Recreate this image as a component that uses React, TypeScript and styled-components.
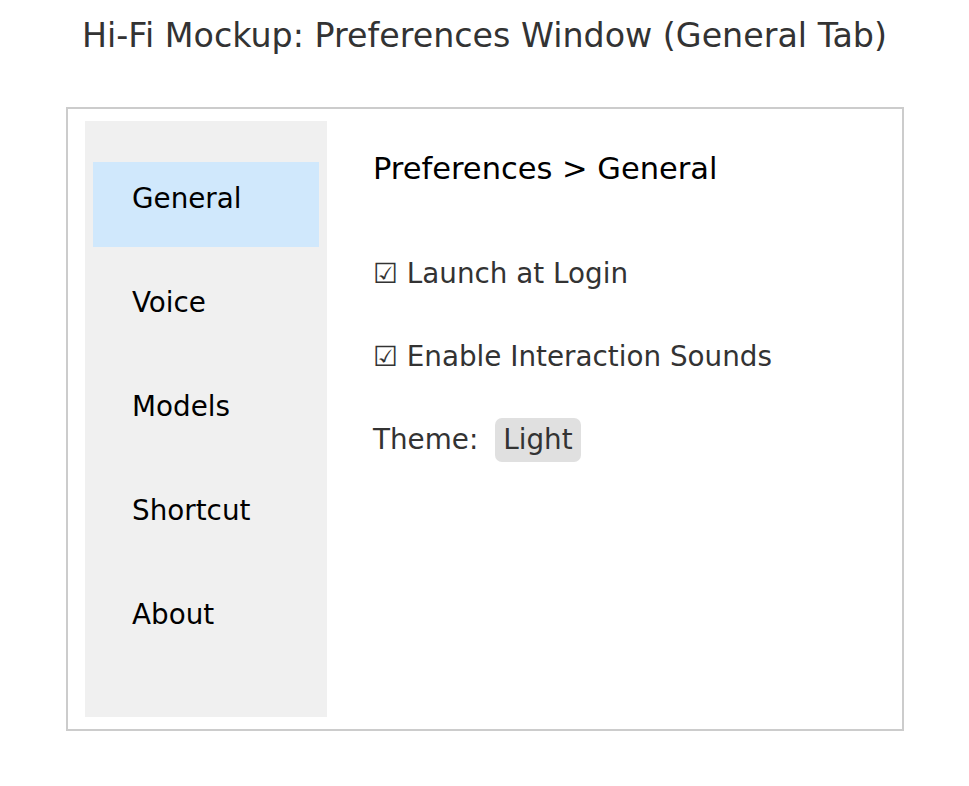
import React from "react";
import styled, { createGlobalStyle } from "styled-components";

const Global = createGlobalStyle`
  html, body { margin: 0; padding: 0; background: #ffffff; }
  body { font-family: "DejaVu Sans", "Noto Sans", sans-serif; }
`;

const Page = styled.div`
  width: 969px;
  height: 786px;
  display: flex;
  flex-direction: column;
  align-items: center;
  background: #ffffff;
`;

const Title = styled.h1`
  margin: 16px 0 0 0;
  font-size: 33.3px;
  line-height: 40px;
  font-weight: normal;
  color: #333333;
  white-space: nowrap;
`;

const Frame = styled.div`
  box-sizing: border-box;
  margin: 51px 0 0 1px;
  width: 838px;
  height: 624px;
  border: 2px solid #cccccc;
  padding: 12px 0 12px 17px;
  display: flex;
`;

const Sidebar = styled.nav`
  box-sizing: border-box;
  width: 242px;
  height: 100%;
  background: #f0f0f0;
  padding: 41px 8px 0 8px;
  display: flex;
  flex-direction: column;
  gap: 19px;
`;

const NavItem = styled.div<{ $active?: boolean }>`
  box-sizing: border-box;
  height: 85px;
  padding: 23px 0 0 39px;
  font-size: 27.8px;
  line-height: 28px;
  color: #000000;
  background: ${(p) => (p.$active ? "#d0e8fc" : "transparent")};
`;

const Content = styled.main`
  flex: 1;
  padding: 30px 0 0 46px;
  display: flex;
  flex-direction: column;
`;

const Heading = styled.h2`
  margin: 0 0 65px 0;
  font-size: 30.5px;
  line-height: 36px;
  font-weight: normal;
  color: #000000;
`;

const Options = styled.div`
  display: flex;
  flex-direction: column;
  gap: 39px;
`;

const Row = styled.div`
  height: 44px;
  display: flex;
  align-items: center;
  font-size: 27.8px;
  line-height: 44px;
  color: #333333;
  white-space: nowrap;
`;

const Pill = styled.span`
  margin-left: 17px;
  padding: 0 8px;
  height: 44px;
  border-radius: 7px;
  background: #e0e0e0;
  display: inline-flex;
  align-items: center;
`;

const navItems = ["General", "Voice", "Models", "Shortcut", "About"];

export default function App() {
  return (
    <Page>
      <Global />
      <Title>Hi-Fi Mockup: Preferences Window (General Tab)</Title>
      <Frame>
        <Sidebar>
          {navItems.map((n) => (
            <NavItem key={n} $active={n === "General"}>
              {n}
            </NavItem>
          ))}
        </Sidebar>
        <Content>
          <Heading>Preferences &gt; General</Heading>
          <Options>
            <Row>☑ Launch at Login</Row>
            <Row>☑ Enable Interaction Sounds</Row>
            <Row>
              Theme:<Pill>Light</Pill>
            </Row>
          </Options>
        </Content>
      </Frame>
    </Page>
  );
}
